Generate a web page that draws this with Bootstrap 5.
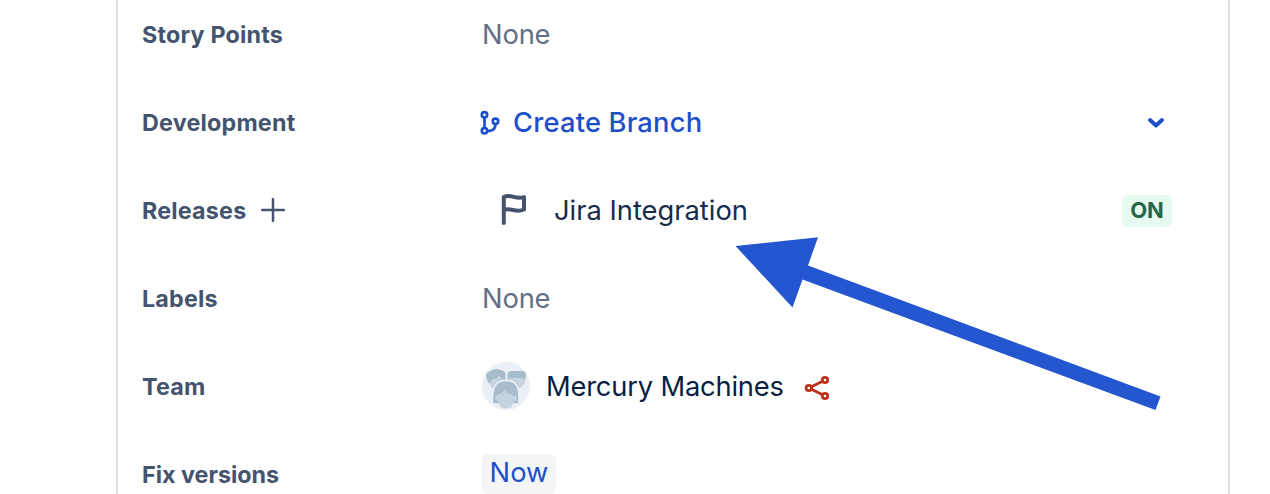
<!DOCTYPE html>
<html lang="en">
<head>
<meta charset="utf-8">
<meta name="viewport" content="width=device-width, initial-scale=1">
<title>Issue details</title>
<link rel="stylesheet" href="https://cdn.jsdelivr.net/npm/bootstrap@5.3.0/dist/css/bootstrap.min.css">
<style>
  body { font-family: Inter, "Liberation Sans", sans-serif; background: #fff; color: #172b4d; height: 494px; }
  .panel { width: 1114px; height: 494px; margin-left: 116px; border: solid #dfe1e6; border-width: 0 2px; padding-left: 24px; padding-right: 56px; }
  .field { height: 88px; flex: none; }
  .field:first-child { height: 79px; padding-bottom: 9px; }
  .field-name { width: 340px; flex: none; font-size: 23.3px; font-weight: 700; letter-spacing: .2px; color: #44546f; line-height: 32px; }
  .field:last-child .field-name { letter-spacing: 0; }
  .field-value { font-size: 27.3px; line-height: 40px; white-space: nowrap; }
  .none { color: #626f86; letter-spacing: -.15px; }
  .branch { color: #1d50c8; font-weight: 550; letter-spacing: .2px; margin-left: 1px; }
  .team { color: #091e42; letter-spacing: -.18px; }
  .status { background: #e6faef; color: #276749; font-size: 22px; font-weight: 700; height: 32px; line-height: 31px; width: 50px; border-radius: 6px; }
  .version { background: #f4f5f7; color: #1d50c8; height: 40px; line-height: 38px; width: 74px; border-radius: 6px; margin-bottom: 2px; }
  .pointer { left: 0; top: 0; pointer-events: none; }
  svg { display: block; flex: none; }
  .field svg { margin-bottom: 2px; }
  .field .share { margin: 2px 0 0 20px; }
  .field .plus { margin-left: 15px; }
  .branch-icon { margin-left: -2px; }
  .expand { margin-right: 6px; }
</style>
</head>
<body class="position-relative overflow-hidden">
<main class="panel d-flex flex-column overflow-hidden">
  <div class="field d-flex align-items-center">
    <div class="field-name">Story Points</div>
    <div class="field-value none">None</div>
  </div>
  <div class="field d-flex align-items-center">
    <div class="field-name">Development</div>
    <div class="field-value d-flex align-items-center flex-grow-1">
      <svg class="branch-icon" width="32" height="30" viewBox="480 107 32 30" fill="none" stroke="#1d50c8" stroke-width="2.7">
        <circle cx="484.5" cy="114.800" r="2.7"/><circle cx="484.5" cy="130.800" r="2.7"/><circle cx="495.500" cy="121.300" r="2.700"/>
        <path d="M484.500 117.500v10.500M487.200 130.800h2.800q5.500-.5 5.500-7"/>
      </svg>
      <a href="#" class="branch text-decoration-none me-auto">Create Branch</a>
      <svg class="expand" width="20" height="14" viewBox="1146 115 20 14" fill="none" stroke="#1d50c8" stroke-width="4" stroke-linecap="round" stroke-linejoin="round"><path d="M1150 120l6 5.500 6-5.500"/></svg>
    </div>
  </div>
  <div class="field d-flex align-items-center">
    <div class="field-name d-flex align-items-center">Releases
      <svg class="plus" width="24" height="24" viewBox="0 0 24 24" fill="none" stroke="#44546f" stroke-width="2.500" stroke-linecap="round"><path d="M12 1.200v21.600M1.200 12h21.600"/></svg>
    </div>
    <div class="field-value d-flex align-items-center flex-grow-1">
      <svg width="72" height="36" viewBox="482 192 72 36" fill="none" stroke="#44546f" stroke-width="4" stroke-linecap="round" stroke-linejoin="round"><path d="M503.800 223V197C511 193.500 516 200 524 197V209.500C516 213.500 511 207 503.800 210"/></svg>
      <span class="me-auto">Jira Integration</span>
      <span class="status text-center">ON</span>
    </div>
  </div>
  <div class="field d-flex align-items-center">
    <div class="field-name">Labels</div>
    <div class="field-value none">None</div>
  </div>
  <div class="field d-flex align-items-center">
    <div class="field-name">Team</div>
    <div class="field-value team d-flex align-items-center">
      <svg width="48" height="48" viewBox="0 0 48 48">
        <circle cx="24" cy="24" r="24" fill="#ebf0f7"/>
        <path d="M6 16h17v5L13 28q-4-2-5-7l-2-1z" fill="#c5d3df"/>
        <path d="M4 14q0-4 4-4.500 4-3.500 9-2 5 .5 6.500 3.500v6.500q-4 .5-6-3-3 3-7 2.500l-3 5Q4 18 4 14z" fill="#a8bdcc"/>
        <path d="M26 15h17v5q-1 5-6 6l-5 2-6-5z" fill="#c5d3df"/>
        <path d="M25.500 18v-6q.5-3 3.500-3h11q4 0 4 4v3l-1.500 2-2-2H27.500z" fill="#a8bdcc"/>
        <path d="M10.500 42V36q0-17.500 13.500-17.500T37 36v6z" fill="#a8bdcc" stroke="#ebf0f7" stroke-width="1.500"/>
        <path d="M13 34q6-1.500 9.500-6 3.500 5 12 6.500v4q-2 1-3 1l-1.500 3v2.500q-6 3-12 0V42l-2-3q-3 0-3-5z" fill="#c5d3df"/>
      </svg>
      <span class="ms-3">Mercury Machines</span>
      <svg class="share" width="26" height="28" viewBox="803 374 26 28" fill="none" stroke="#bf2f19" stroke-width="2.800"><circle cx="807.800" cy="388" r="2.700"/><circle cx="824" cy="380" r="2.700"/><circle cx="824" cy="396" r="2.700"/><path d="M810.500 386.700l11-5.500M810.500 389.300l11 5.500"/></svg>
    </div>
  </div>
  <div class="field d-flex align-items-center">
    <div class="field-name">Fix versions</div>
    <div class="field-value version text-center">Now</div>
  </div>
</main>
<svg class="pointer position-absolute" width="1270" height="494" viewBox="0 0 1270 494"><path d="M735.500 246L818 237.300 808 265.500 1160.500 396.500 1155.500 410 802.500 279.500 792.500 307.500z" fill="#2356cf"/></svg>
<script src="https://cdn.jsdelivr.net/npm/bootstrap@5.3.0/dist/js/bootstrap.bundle.min.js"></script>
</body>
</html>
